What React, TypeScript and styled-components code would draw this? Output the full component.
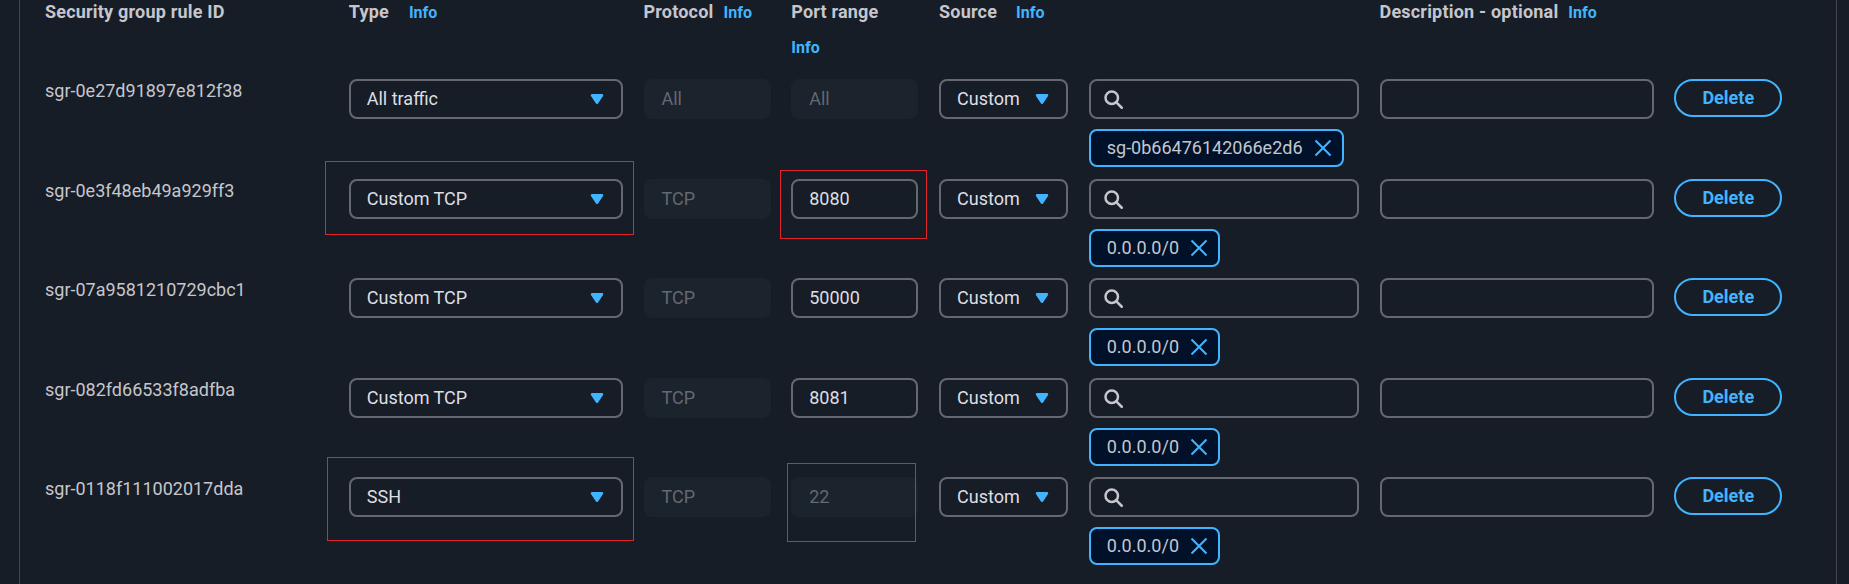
import React from "react";
import styled, { createGlobalStyle } from "styled-components";

const Global = createGlobalStyle`
  html, body {
    margin: 0;
    padding: 0;
    background: #161d26;
  }
  body {
    font-family: Roboto, "Noto Sans", "Liberation Sans", sans-serif;
    font-size: 18px;
    line-height: 22px;
    color: #c6c6cd;
  }
  * { box-sizing: border-box; }
`;

const COLS = "283px 274px 127px 127px 129px 270px 274px 108px";

const Page = styled.div`
  height: 584px;
  overflow: hidden;
  padding-left: 19px;
  width: 1849px;
`;

const Panel = styled.div`
  width: 1818px;
  height: 584px;
  border-left: 1px solid #424650;
  border-right: 1px solid #424650;
  padding: 1px 0 0 25px;
`;

const HeaderGrid = styled.div`
  display: grid;
  grid-template-columns: ${COLS};
  column-gap: 20.75px;
  align-items: start;
  height: 78px;
`;

const HeaderCell = styled.div<{ $stacked?: boolean; $infoGap?: number }>`
  display: flex;
  flex-direction: ${(p) => (p.$stacked ? "column" : "row")};
  align-items: ${(p) => (p.$stacked ? "flex-start" : "baseline")};
  gap: ${(p) => (p.$stacked ? 14 : p.$infoGap ?? 10)}px;
`;

const HeaderText = styled.span`
  font-weight: 700;
  color: #c6c6cd;
  letter-spacing: 0.2px;
  white-space: nowrap;
`;

const InfoLink = styled.a`
  font-size: 16px;
  font-weight: 700;
  color: #42b4ff;
  text-decoration: none;
  line-height: 22px;
`;

const Rows = styled.div`
  display: flex;
  flex-direction: column;
  gap: 11.6px;
`;

const RowGrid = styled.div`
  display: grid;
  grid-template-columns: ${COLS};
  column-gap: 20.75px;
  align-items: start;
  height: 88px;
`;

const RuleId = styled.div`
  padding-top: 1px;
  color: #c6c6cd;
  white-space: nowrap;
`;

const Cell = styled.div`
  position: relative;
`;

const Field = styled.div<{ $disabled?: boolean }>`
  height: 40px;
  display: flex;
  align-items: center;
  justify-content: space-between;
  padding: 0 14px 0 16px;
  border-radius: 8px;
  border: 2px solid ${(p) => (p.$disabled ? "#1b232d" : "#656871")};
  background: ${(p) => (p.$disabled ? "#1b232d" : "#161d26")};
  color: ${(p) => (p.$disabled ? "#656871" : "#dedee3")};
  white-space: nowrap;
`;

const SearchField = styled(Field)`
  justify-content: flex-start;
  padding-left: 12px;
  width: 100%;
`;

const SearchColumn = styled.div`
  display: flex;
  flex-direction: column;
  align-items: flex-start;
  gap: 10px;
`;

const Token = styled.div`
  height: 38px;
  display: flex;
  align-items: center;
  gap: 10px;
  padding: 0 9px 0 16px;
  border: 2px solid #42b4ff;
  border-radius: 8px;
  background: #001129;
  color: #c6c6cd;
  white-space: nowrap;
`;

const DeleteButton = styled.button`
  height: 38px;
  width: 108px;
  border: 2px solid #42b4ff;
  border-radius: 20px;
  background: transparent;
  color: #42b4ff;
  font-family: inherit;
  font-size: 18px;
  font-weight: 700;
  line-height: 22px;
  padding: 0;
  cursor: pointer;
`;

const Highlight = styled.div`
  position: absolute;
  border: 1px solid #e0262c;
  pointer-events: none;
`;

const IconBox = styled.svg`
  width: 20px;
  height: 20px;
  flex: none;
`;

const Caret = () => (
  <IconBox viewBox="0 0 16 16">
    <path d="M4 5h8l-4 6-4-6z" fill="#42b4ff" stroke="#42b4ff" strokeWidth="2" strokeLinejoin="round" />
  </IconBox>
);

const SearchIcon = () => (
  <IconBox viewBox="0 0 16 16">
    <circle cx="7" cy="7" r="5" fill="none" stroke="#c6c6cd" strokeWidth="2" />
    <path d="m15 15-4.5-4.5" fill="none" stroke="#c6c6cd" strokeWidth="2" strokeLinecap="round" />
  </IconBox>
);

const CloseIcon = () => (
  <IconBox viewBox="0 0 16 16">
    <path d="m2 2 12 12M14 2 2 14" fill="none" stroke="#42b4ff" strokeWidth="1.6" />
  </IconBox>
);

type Box = { left: number; right: number; top: number; bottom: number };

type Rule = {
  id: string;
  type: string;
  protocol: string;
  port: string;
  portDisabled?: boolean;
  source: string;
  hlType?: Box;
  hlPort?: Box;
};

const rules: Rule[] = [
  { id: "sgr-0e27d91897e812f38", type: "All traffic", protocol: "All", port: "All", portDisabled: true, source: "sg-0b66476142066e2d6" },
  {
    id: "sgr-0e3f48eb49a929ff3", type: "Custom TCP", protocol: "TCP", port: "8080", source: "0.0.0.0/0",
    hlType: { left: -24, right: -11, top: -18, bottom: -16 },
    hlPort: { left: -11, right: -9, top: -9, bottom: -20 },
  },
  { id: "sgr-07a9581210729cbc1", type: "Custom TCP", protocol: "TCP", port: "50000", source: "0.0.0.0/0" },
  { id: "sgr-082fd66533f8adfba", type: "Custom TCP", protocol: "TCP", port: "8081", source: "0.0.0.0/0" },
  {
    id: "sgr-0118f111002017dda", type: "SSH", protocol: "TCP", port: "22", portDisabled: true, source: "0.0.0.0/0",
    hlType: { left: -22, right: -11, top: -20, bottom: -24 },
    hlPort: { left: -4, right: 2, top: -14, bottom: -25 },
  },
];

const Mark = ({ box }: { box?: Box }) =>
  box ? <Highlight style={{ left: box.left, right: box.right, top: box.top, bottom: box.bottom }} /> : null;

export default function App() {
  return (
    <>
      <Global />
      <Page>
        <Panel>
          <HeaderGrid>
            <HeaderCell><HeaderText>Security group rule ID</HeaderText></HeaderCell>
            <HeaderCell $infoGap={20}><HeaderText>Type</HeaderText><InfoLink>Info</InfoLink></HeaderCell>
            <HeaderCell><HeaderText>Protocol</HeaderText><InfoLink>Info</InfoLink></HeaderCell>
            <HeaderCell $stacked><HeaderText>Port range</HeaderText><InfoLink>Info</InfoLink></HeaderCell>
            <HeaderCell $infoGap={19}><HeaderText>Source</HeaderText><InfoLink>Info</InfoLink></HeaderCell>
            <HeaderCell />
            <HeaderCell><HeaderText>Description - optional</HeaderText><InfoLink>Info</InfoLink></HeaderCell>
            <HeaderCell />
          </HeaderGrid>
          <Rows>
            {rules.map((r) => (
              <RowGrid key={r.id}>
                <RuleId>{r.id}</RuleId>
                <Cell>
                  <Field>
                    <span>{r.type}</span>
                    <Caret />
                  </Field>
                  <Mark box={r.hlType} />
                </Cell>
                <Cell>
                  <Field $disabled>{r.protocol}</Field>
                </Cell>
                <Cell>
                  <Field $disabled={r.portDisabled}>{r.port}</Field>
                  <Mark box={r.hlPort} />
                </Cell>
                <Cell>
                  <Field>
                    <span>Custom</span>
                    <Caret />
                  </Field>
                </Cell>
                <SearchColumn>
                  <SearchField>
                    <SearchIcon />
                  </SearchField>
                  <Token>
                    <span>{r.source}</span>
                    <CloseIcon />
                  </Token>
                </SearchColumn>
                <Cell>
                  <Field />
                </Cell>
                <Cell>
                  <DeleteButton>Delete</DeleteButton>
                </Cell>
              </RowGrid>
            ))}
          </Rows>
        </Panel>
      </Page>
    </>
  );
}
